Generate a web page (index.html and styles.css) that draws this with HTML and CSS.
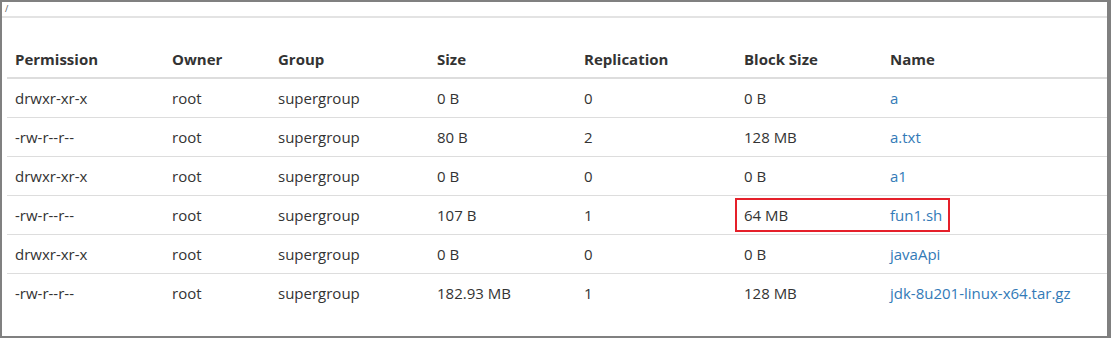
FILE: index.html
```html
<!DOCTYPE html>
<html>
<head>
<meta charset="utf-8">
<link rel="stylesheet" href="styles.css">
</head>
<body>
<div class="frame">
  <div class="crumb"><span class="slash">/</span></div>
  <table class="listing">
    <colgroup>
      <col class="c-perm"><col class="c-owner"><col class="c-group"><col class="c-size"><col class="c-rep"><col class="c-block"><col class="c-name">
    </colgroup>
    <thead>
      <tr><th>Permission</th><th>Owner</th><th>Group</th><th>Size</th><th>Replication</th><th>Block Size</th><th>Name</th></tr>
    </thead>
    <tbody>
      <tr><td>drwxr-xr-x</td><td>root</td><td>supergroup</td><td>0 B</td><td>0</td><td>0 B</td><td><a href="#">a</a></td></tr>
      <tr><td>-rw-r--r--</td><td>root</td><td>supergroup</td><td>80 B</td><td>2</td><td>128 MB</td><td><a href="#">a.txt</a></td></tr>
      <tr><td>drwxr-xr-x</td><td>root</td><td>supergroup</td><td>0 B</td><td>0</td><td>0 B</td><td><a href="#">a1</a></td></tr>
      <tr><td>-rw-r--r--</td><td>root</td><td>supergroup</td><td>107 B</td><td>1</td><td>64 MB</td><td><a href="#">fun1.sh</a></td></tr>
      <tr><td>drwxr-xr-x</td><td>root</td><td>supergroup</td><td>0 B</td><td>0</td><td>0 B</td><td><a href="#">javaApi</a></td></tr>
      <tr><td>-rw-r--r--</td><td>root</td><td>supergroup</td><td>182.93 MB</td><td>1</td><td>128 MB</td><td><a href="#">jdk-8u201-linux-x64.tar.gz</a></td></tr>
    </tbody>
  </table>
  <div class="highlight"></div>
</div>
</body>
</html>
```

FILE: styles.css
```css
html, body {
  margin: 0;
  padding: 0;
  background: #fff;
}
.frame {
  position: relative;
  box-sizing: border-box;
  width: 1111px;
  height: 338px;
  border-style: solid;
  border-color: #808080;
  border-width: 2px 4px 2px 2px;
  font-family: "Open Sans", "Noto Sans", sans-serif;
  font-size: 15px;
  color: #333;
  overflow: hidden;
}
.crumb {
  box-sizing: border-box;
  height: 16px;
  padding: 1px 0 0 3px;
  border-bottom: 2px solid #e3e3e3;
}
.slash {
  display: block;
  font-size: 9px;
  line-height: 11px;
  color: #555;
}
.listing {
  margin: 22px 0 0 5px;
  width: 1100px;
  border-collapse: collapse;
  border-spacing: 0;
  table-layout: fixed;
}
.c-perm { width: 157px; }
.c-owner { width: 106px; }
.c-group { width: 159px; }
.c-size { width: 147px; }
.c-rep { width: 160px; }
.c-block { width: 146px; }
.c-name { width: auto; }
.listing th,
.listing td {
  padding: 8px;
  line-height: 22px;
  text-align: left;
  vertical-align: top;
  white-space: nowrap;
}
.listing th {
  font-weight: 700;
  padding-bottom: 7px;
  border-bottom: 2px solid #ddd;
}
.listing tbody td {
  border-top: 1px solid #ddd;
}
.listing tbody tr:first-child td {
  border-top: 0;
}
.listing a {
  color: #337ab7;
  text-decoration: none;
}
.highlight {
  position: absolute;
  left: 733px;
  top: 196px;
  width: 211px;
  height: 30px;
  border: 2px solid #e5202a;
}
```
